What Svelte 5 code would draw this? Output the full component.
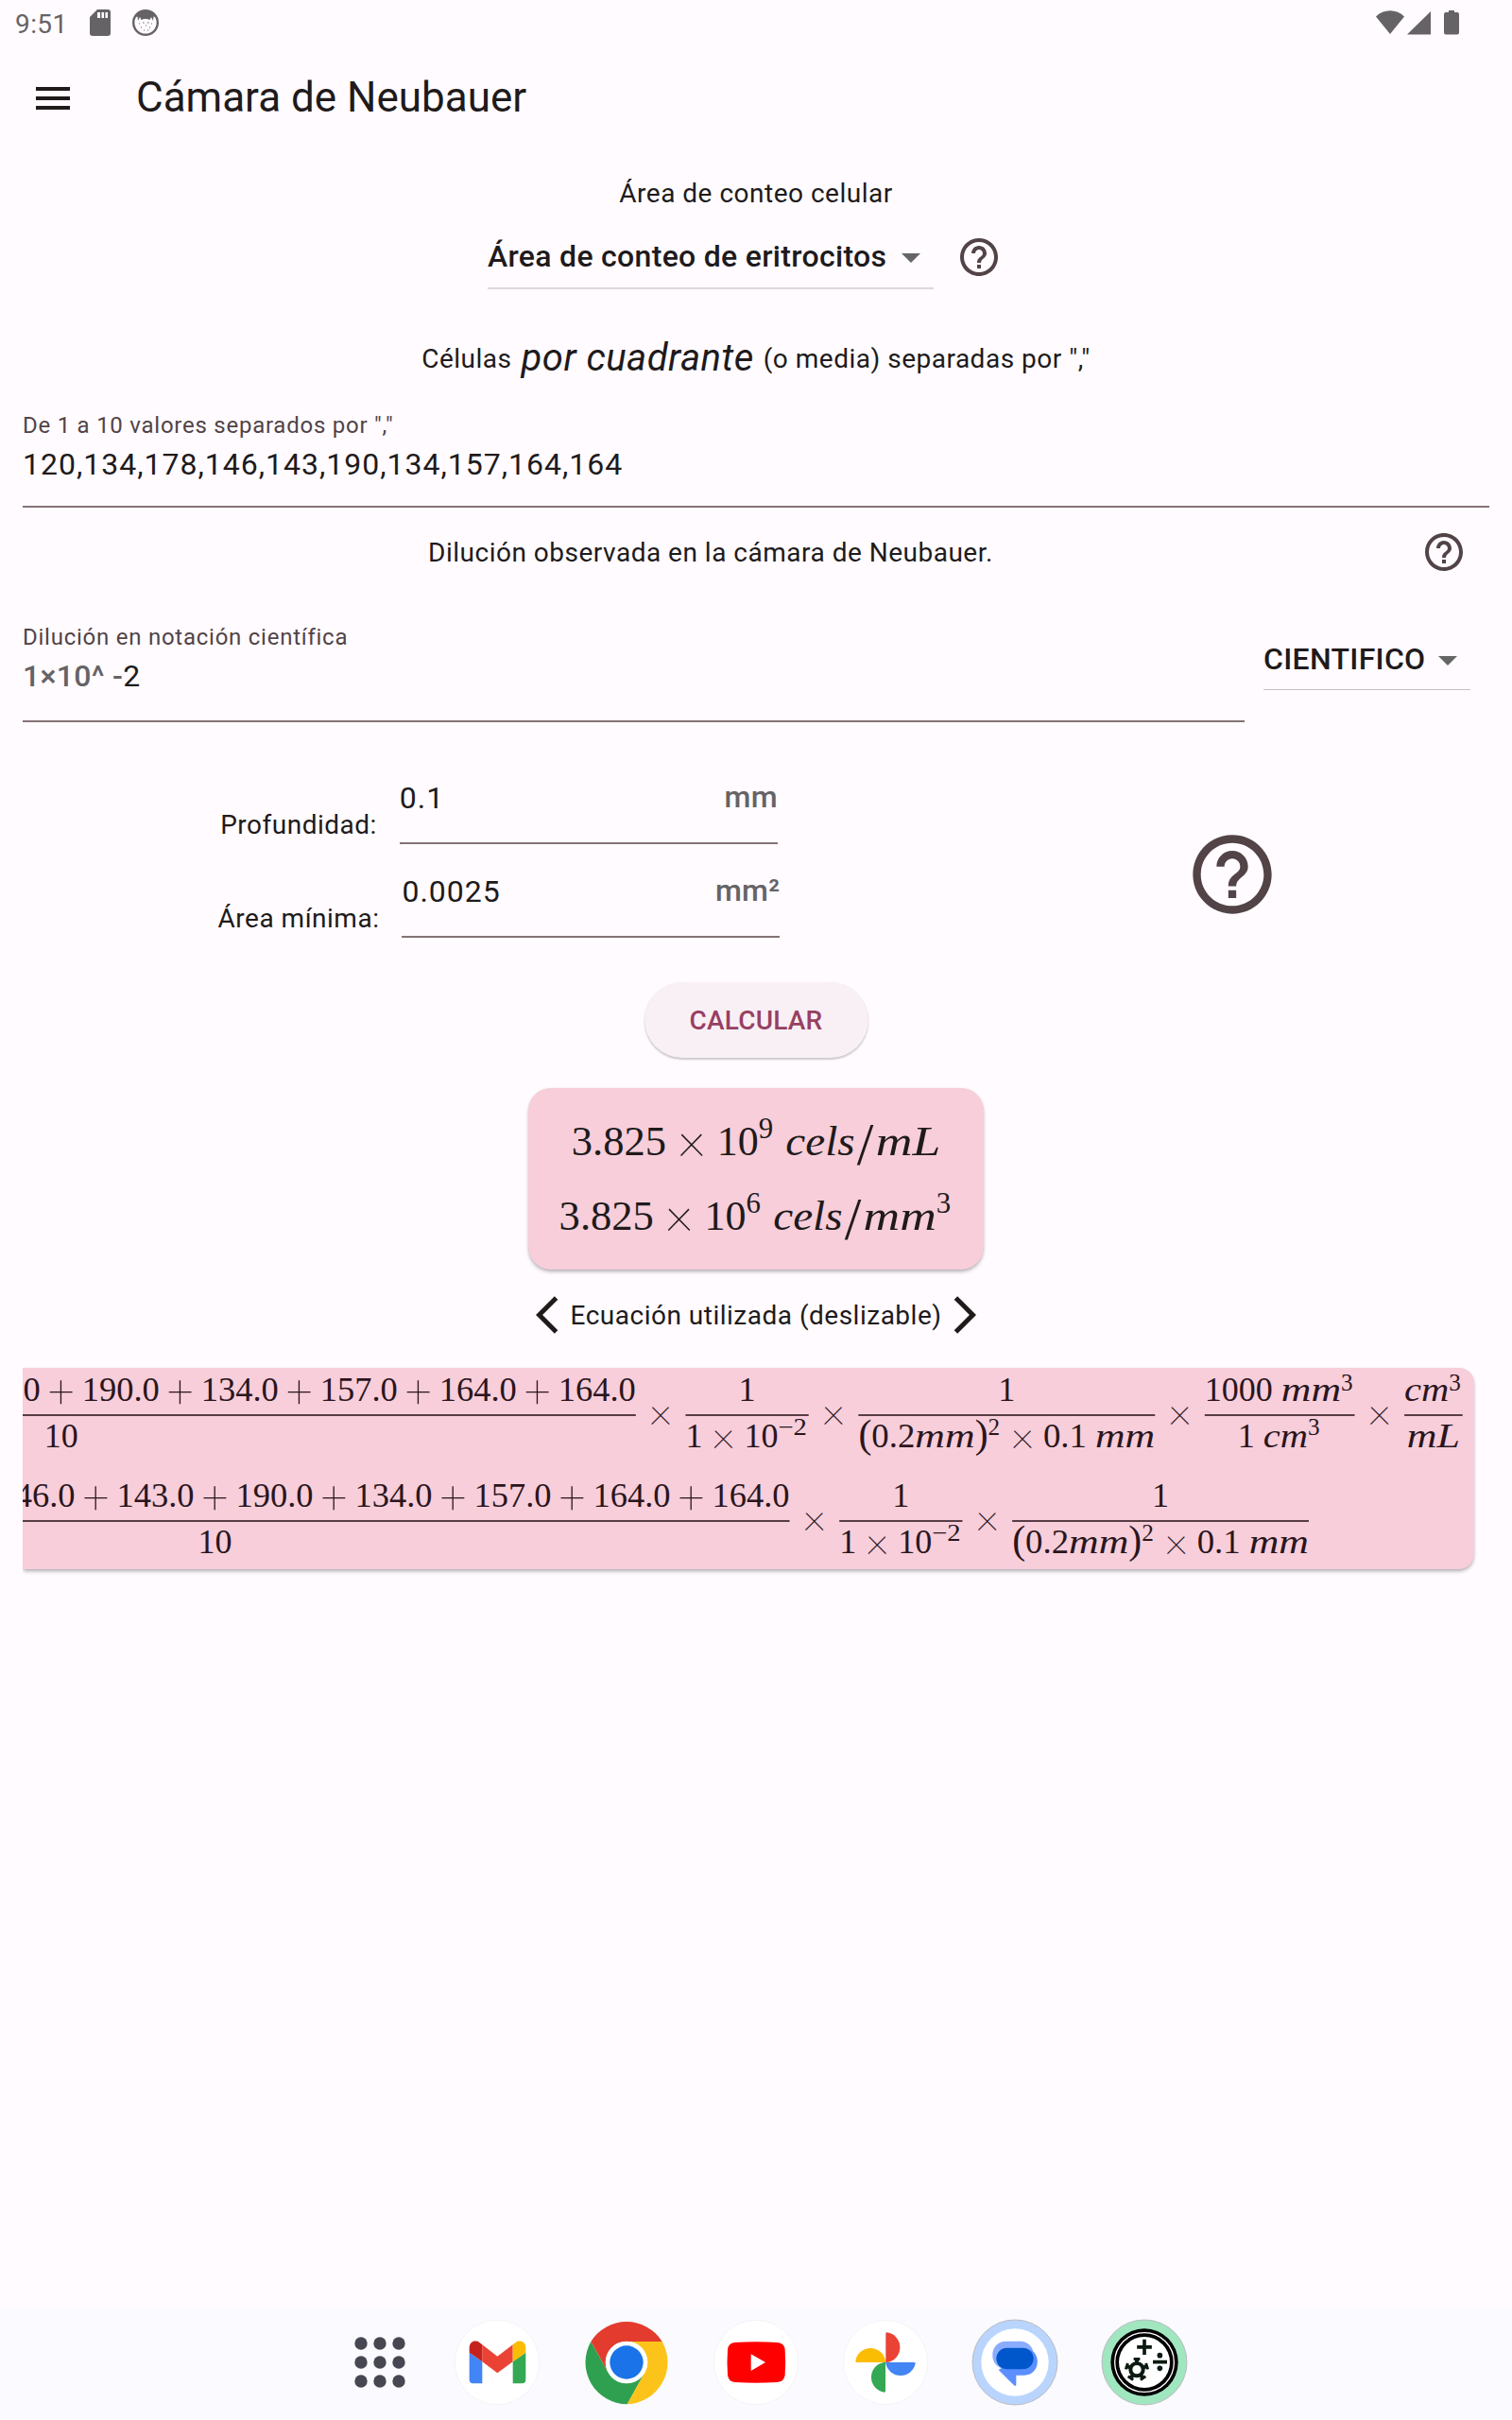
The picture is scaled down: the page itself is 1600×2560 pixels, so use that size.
<script lang="ts">
  type Tok =
    | { k: 'rm' | 'it' | 'op' | 'paren' | 'slash'; t: string }
    | { k: 'sup'; t: string; up: number }
    | { k: 'sp' }
    | { k: 'frac'; num: Tok[]; den: Tok[] };
  type Glyph = { x: number; y: number; t: string; size: number; w: number; cls: string };
  type Bar = { x: number; y: number; w: number; h: number };

  // Advance widths in em
  const adv: Record<string, number> = {
    '.': 0.278, c: 0.433, e: 0.466, l: 0.298, s: 0.469, m: 0.878, L: 0.681, '−': 0.71
  };
  const runWidth = (t: string) => [...t].reduce((a, ch) => a + (adv[ch] ?? 0.5), 0);

  function width(toks: Tok[]): number {
    return toks.reduce((a, k) => a + tokWidth(k), 0);
  }
  function tokWidth(k: Tok): number {
    if (k.k === 'op') return 1.222;
    if (k.k === 'paren') return 0.389;
    if (k.k === 'slash') return 0.5;
    if (k.k === 'sp') return 0.25;
    if (k.k === 'sup') return runWidth(k.t) * 0.7 + 0.05;
    if (k.k === 'frac') return Math.max(width(k.num), width(k.den)) + 0.24;
    return runWidth(k.t);
  }

  function place(toks: Tok[], x: number, y: number, em: number, g: Glyph[], b: Bar[]) {
    for (const k of toks) {
      const w = tokWidth(k) * em;
      if (k.k === 'frac') {
        const inner = w - 0.24 * em;
        const left = x + 0.12 * em;
        place(k.num, left + (inner - width(k.num) * em) / 2, y - 0.672 * em, em, g, b);
        place(k.den, left + (inner - width(k.den) * em) / 2, y + 0.7 * em, em, g, b);
        b.push({ x: left, y: y - 0.25 * em - 1, w: inner, h: 2 });
      } else if (k.k === 'op') {
        const plus = k.t === '+';
        const scale = plus ? 1.36 : 1.3;
        const rise = plus ? 0.335 : 0.21;
        g.push({ x: x + w / 2, y: y + (scale * rise - 0.25) * em, t: k.t, size: em * scale, w: 0, cls: 'mid op' });
      } else if (k.k === 'paren') {
        g.push({ x: x + w / 2, y: y - 0.01 * em, t: k.t, size: em * 1.16, w: 0, cls: 'mid' });
      } else if (k.k === 'slash') {
        g.push({ x: x + w / 2, y: y + 0.235 * em, t: k.t, size: em * 1.44, w: 0, cls: 'mid' });
      } else if (k.k === 'sup') {
        g.push({ x, y: y - k.up * em, t: k.t, size: em * 0.7, w: w - 0.05 * em, cls: 'rm' });
      } else if (k.k !== 'sp') {
        g.push({ x, y, t: k.t, size: em, w, cls: k.k });
      }
      x += w;
    }
  }

  const rm = (t: string): Tok => ({ k: 'rm', t });
  const it = (t: string): Tok => ({ k: 'it', t });
  const op = (t: string): Tok => ({ k: 'op', t });
  const sup = (t: string, up = 0.413): Tok => ({ k: 'sup', t, up });
  const sp: Tok = { k: 'sp' };
  const frac = (num: Tok[], den: Tok[]): Tok => ({ k: 'frac', num, den });

  const values = '120,134,178,146,143,190,134,157,164,164';
  const sum = values.split(',').flatMap((v, i) => (i ? [op('+'), rm(v + '.0')] : [rm(v + '.0')]));
  const mean = frac(sum, [rm('10')]);
  const dilution = frac([rm('1')], [rm('1'), op('×'), rm('10'), sup('−2', 0.36)]);
  const volume = frac(
    [rm('1')],
    [{ k: 'paren', t: '(' }, rm('0.2'), it('mm'), { k: 'paren', t: ')' }, sup('2', 0.36), op('×'), rm('0.1'), sp, it('mm')]
  );
  const eq1 = [
    mean, op('×'), dilution, op('×'), volume, op('×'),
    frac([rm('1000'), sp, it('mm'), sup('3', 0.3)], [rm('1'), sp, it('cm'), sup('3', 0.36)]),
    op('×'),
    frac([it('cm'), sup('3', 0.3)], [it('mL')])
  ];
  const eq2 = [mean, op('×'), dilution, op('×'), volume];

  const cels: Tok[] = [it('cels'), { k: 'slash', t: '/' }];
  const r1 = [rm('3.825'), op('×'), rm('10'), sup('9', 0.4), sp, ...cels, it('mL')];
  const r2 = [rm('3.825'), op('×'), rm('10'), sup('6', 0.4), sp, ...cels, it('mm'), sup('3', 0.4)];

  function build(lines: { toks: Tok[]; center: number; y: number }[], em: number) {
    const g: Glyph[] = [];
    const b: Bar[] = [];
    for (const l of lines) place(l.toks, l.center - (width(l.toks) * em) / 2, l.y, em, g, b);
    // Runs scrolled past the left edge are not rendered
    return { g: g.filter((o) => o.x + o.w > 0), b };
  }
  const scrollCenter = 1528 - (width(eq1) * 36) / 2;
  const equation = build(
    [{ toks: eq1, center: scrollCenter, y: 59 }, { toks: eq2, center: scrollCenter, y: 171 }],
    36
  );
  const result = build([{ toks: r1, center: 241, y: 70.5 }, { toks: r2, center: 241, y: 149.5 }], 44);
</script>

{#snippet help(cls: string)}
  <svg class={cls} viewBox="0 0 24 24"><path fill="#524347" d="M11 18h2v-2h-2v2zm1-16C6.480 2 2 6.480 2 12s4.480 10 10 10 10-4.480 10-10S17.520 2 12 2zm0 18c-4.410 0-8-3.590-8-8s3.590-8 8-8 8 3.590 8 8-3.590 8-8 8zm0-14c-2.210 0-4 1.790-4 4h2c0-1.100.9-2 2-2s2 .9 2 2c0 2-3 1.750-3 5h2c0-2.250 3-2.500 3-5 0-2.210-1.790-4-4-4z" /></svg>
{/snippet}

{#snippet caret()}
  <svg class="caret" viewBox="0 0 20 10"><path d="M0 0h20L10 10z" fill="#666" /></svg>
{/snippet}

{#snippet math(m: { g: Glyph[]; b: Bar[] })}
  {#each m.b as b}<rect x={b.x} y={b.y} width={b.w} height={b.h} opacity="0.78" />{/each}
  {#each m.g as g}
    {#if g.w}
      <text class={g.cls} x={g.x} y={g.y} font-size={g.size} textLength={g.w} lengthAdjust="spacingAndGlyphs">{g.t}</text>
    {:else}
      <text class={g.cls} x={g.x} y={g.y} font-size={g.size}>{g.t}</text>
    {/if}
  {/each}
{/snippet}

<div class="screen">
  <div class="status">
    <span class="clock">9:51</span>
    <svg class="sd" viewBox="0 0 22 28"><path fill="#666366" d="M8 0h11a3 3 0 0 1 3 3v22a3 3 0 0 1-3 3H3a3 3 0 0 1-3-3V8z" /><path fill="#fffbff" d="M8 3h3v6H8zM12.500 3h2.500v6h-2.500zM16.500 3h2.500v6h-2.500z" /></svg>
    <svg class="face" viewBox="0 0 28 28"><circle cx="14" cy="14" r="12.800" fill="#fffbff" stroke="#666366" stroke-width="2.400" /><path fill="#666366" d="M3.500 8C8-1 20-1 24.500 8L22.500 7.500 22 12l-2-4-1.500 3-3-1h-3l-3 1L8 8l-2 4-.5-4.500z" /><path stroke="#666366" stroke-width="1.200" fill="none" d="M7 15h1M11 14h1.500M16 14h1.500M20 15h1M9 19h1M14 17h1M18 19h1M12 22h1M16 22h1" /></svg>
    <span class="grow"></span>
    <svg class="signals" viewBox="0 0 90 28"><g fill="#666366"><path d="M0 6.500C8-1.800 22-1.800 30 6.500L15 25z" /><path d="M33 25.500L58 1v24.500z" /><path d="M77 0h6v2h3a2 2 0 0 1 2 2v19.500a2 2 0 0 1-2 2H74a2 2 0 0 1-2-2V4a2 2 0 0 1 2-2h3z" /></g></svg>
  </div>

  <header>
    <svg class="menu" viewBox="0 0 36 24"><path fill="#201a1b" d="M0 0h36v4H0zM0 10h36v4H0zM0 20h36v4H0z" /></svg>
    <h1>Cámara de Neubauer</h1>
  </header>

  <main>
    <div class="caption">Área de conteo celular</div>
    <div class="area">
      <div class="select wide"><span>Área de conteo de eritrocitos</span>{@render caret()}</div>
      {@render help('q')}
    </div>
    <div class="cells"><span>Células</span><em>por cuadrante</em><span>(o media) separadas por ","</span></div>

    <div class="field first">
      <div class="label">De 1 a 10 valores separados por ","</div>
      <div class="value">{values}</div>
    </div>

    <div class="observed"><span>Dilución observada en la cámara de Neubauer.</span>{@render help('q')}</div>

    <div class="dilution">
      <div class="field second">
        <div class="label">Dilución en notación científica</div>
        <div class="value"><span class="affix">1×10^ -</span>2</div>
      </div>
      <div class="select small"><span>CIENTIFICO</span>{@render caret()}</div>
    </div>

    <div class="params">
      <div class="dims">
        <div class="dim"><span class="name">Profundidad:</span><div class="box"><span>0.1</span><span class="affix unit">mm</span></div></div>
        <div class="dim"><span class="name">Área mínima:</span><div class="box"><span>0.0025</span><span class="affix unit">mm²</span></div></div>
      </div>
      <div class="bighelp">{@render help('q big')}</div>
    </div>

    <button>CALCULAR</button>

    <svg class="result" width="482" height="192">{@render math(result)}</svg>

    <div class="hint">
      <svg class="chev" viewBox="0 2 12 20"><path fill="#201a1b" d="M11.670 3.870L9.900 2.100 0 12l9.900 9.900 1.770-1.770L3.540 12z" /></svg>
      <span>Ecuación utilizada (deslizable)</span>
      <svg class="chev" viewBox="0 2 12 20"><path fill="#201a1b" d="M.33 3.870L2.100 2.100 12 12l-9.900 9.900-1.770-1.770L8.460 12z" /></svg>
    </div>

    <svg class="equation" width="1536" height="213">{@render math(equation)}</svg>
  </main>

  <nav>
    <svg class="apps" viewBox="0 0 54 54"><g fill="#474751">{#each [7, 27, 47] as y}{#each [7, 27, 47] as x}<circle cx={x} cy={y} r="6.700" />{/each}{/each}</g></svg>
    <svg class="app" viewBox="-141 -141 282 282">
      <circle r="134" fill="#fff" stroke="#eeeef4" stroke-width="2" />
      <path fill="#4285f4" d="M-88-31L-47-2V67H-76a12 12 0 0 1-12-12z" />
      <path fill="#34a853" d="M91-31L50-2V67H79a12 12 0 0 0 12-12z" />
      <path fill="#ea4335" d="M-47-56L1-19 50-56V-2L1 34-47-2z" />
      <path fill="#c5221f" d="M-88-31V-46C-88-66-69-73-56-63L-47-56V-2z" />
      <path fill="#fbbc04" d="M91-31V-46C91-66 72-73 59-63L50-56V-2z" />
    </svg>
    <svg class="app" viewBox="-141 -141 282 282">
      <path fill="#2fa050" d="M-113-66L-58 32A66 66 0 0 0 58 32L2 133A133 133 0 0 1-113-66z" />
      <path fill="#fcc31a" d="M113-66A133 133 0 0 1 2 133L58 32A66 66 0 0 0 0-66z" />
      <path fill="#e33b2e" d="M-113-66A133 133 0 0 1 113-66H0A66 66 0 0 0-58 32z" />
      <circle r="67" fill="#fff" /><circle r="53" fill="#1a73e8" />
    </svg>
    <svg class="app" viewBox="-141 -141 282 282">
      <circle r="134" fill="#fff" stroke="#eeeef4" stroke-width="2" />
      <path fill="#f00" d="M-68-63Q0-67 68-63Q90-61 92-40Q95 0 92 40Q90 61 68 63Q0 67-68 63Q-88 61-90 40Q-93 0-90-40Q-88-61-68-63z" />
      <path fill="#fff" d="M-16-26V27L30 0z" />
    </svg>
    <svg class="app" viewBox="-141 -141 282 282">
      <circle r="134" fill="#fff" stroke="#eeeef4" stroke-width="2" />
      <path fill="#ea4335" d="M1 0V-91Q1-95 5-95A48 48 0 0 1 5 0z" />
      <path fill="#fbbc04" d="M0 0H-91Q-95 0-95-4A48 48 0 0 1 0-4z" />
      <path fill="#4285f4" d="M1 0H91Q95 0 95 4A48 48 0 0 1 1 4z" />
      <path fill="#34a853" d="M0 0V91Q0 95-4 95A48 48 0 0 1-4 0z" />
    </svg>
    <svg class="app" viewBox="-141 -141 282 282">
      <circle r="135" fill="#b9d5fe" stroke="#bcbcc2" stroke-width="3" /><circle r="107" fill="#fff" />
      <rect x="-71" y="-67" width="130" height="88" rx="42" fill="#8aacff" />
      <path fill="#5c8fff" d="M50-39C84-24 78 40 30 41H4V70Q3 78-3 73L-52 24z" />
      <rect x="-59" y="-46" width="118" height="68" rx="34" fill="#0057cc" />
    </svg>
    <svg class="app" viewBox="-141 -141 282 282">
      <circle r="135" fill="#a0e6bf" stroke="#bcbcc2" stroke-width="3" /><circle r="107" fill="#000" />
      <circle r="94" fill="none" stroke="#fff" stroke-width="4" /><circle r="81" fill="#fff" />
      <g fill="#0c1a10">
        <path d="M-5.500-73h11v19h18v11h-18v19h-11v-19h-18v-11h18zM27-6.500h45v11H27z" /><circle cx="49" cy="-22" r="8.500" /><circle cx="49" cy="19" r="8.500" />
        <g transform="translate(-24 23)">
          <circle r="20" fill="none" stroke="#0c1a10" stroke-width="12" />
          {#each [0, 72, 144, 216, 288] as a}<path transform="rotate({a})" d="M-10-38h20v9H6v8H-6v-8h-4z" />{/each}
        </g>
      </g>
    </svg>
  </nav>
</div>

<style>
  :global(body) { background: #fffbff; }
  .screen { display: flex; flex-direction: column; height: 2560px; width: 1600px; font-family: Roboto, sans-serif; font-size: 28px; letter-spacing: 0.5px; color: #201a1b; background: #fffbff; overflow: hidden; }
  svg { display: block; flex: none; }
  .status { display: flex; align-items: center; height: 48px; padding: 0 54px 0 16px; box-sizing: border-box; }
  .clock { width: 79px; font-size: 28px; letter-spacing: 0.4px; color: #666366; padding-top: 2px; }
  .sd { width: 22px; height: 28px; }
  .face { width: 28px; height: 28px; margin-left: 23px; }
  .grow { flex: 1; }
  .signals { width: 90px; height: 28px; padding-top: 2px; }
  header { display: flex; align-items: center; height: 112px; padding-left: 38px; }
  .menu { width: 36px; height: 24px; }
  h1 { margin: 0 0 3px 70px; font-size: 44px; font-weight: 400; letter-spacing: 0; }
  main { display: flex; flex-direction: column; padding: 0 24px; }
  .caption { height: 63px; margin-top: 13px; line-height: 64px; text-align: center; }
  .area { display: flex; height: 70px; align-items: center; padding-left: 492px; gap: 24px; }
  .area > .q { margin-top: 2px; }
  .q { width: 48px; height: 48px; }
  .select { display: flex; align-items: center; justify-content: space-between; box-sizing: border-box; font-size: 32px; font-weight: 500; letter-spacing: 0.3px; white-space: nowrap; }
  .caret { width: 20px; height: 10px; margin-top: 4px; }
  .wide { width: 472px; height: 69px; padding: 1px 14px 0 0; border-bottom: 2px solid #dcd9dc; }
  .cells { display: flex; align-items: center; justify-content: center; height: 124px; padding-top: 22px; box-sizing: border-box; white-space: nowrap; gap: 10px; }
  em { font-size: 40px; letter-spacing: 0.5px; padding-bottom: 1px; }
  .field { box-sizing: border-box; border-bottom: 2px solid #857376; }
  .label { height: 28px; padding-top: 1px; line-height: 29px; font-size: 24px; letter-spacing: 0.75px; color: #524347; }
  .value { height: 54px; line-height: 54px; font-size: 32px; letter-spacing: 1px; }
  .first { height: 107px; padding-top: 5px; }
  .observed { display: flex; align-items: center; height: 94px; padding-right: 24px; }
  .observed span { flex: 1; text-align: center; padding-right: 24px; }
  .affix { color: #666366; font-weight: 500; letter-spacing: 0.3px; }
  .unit { margin-top: -1px; }
  .dilution { display: flex; height: 133px; }
  .second { width: 1293px; padding-top: 28px; }
  .small { width: 219px; height: 64px; margin: 35px 0 0 20px; padding: 0 14px 2px 0; border-bottom: 1px solid #c2bfc2; }
  .params { display: flex; height: 228px; margin-bottom: 47px; }
  .dims { width: 1007px; padding-top: 30px; }
  .dim { display: flex; justify-content: center; height: 99px; padding-left: 1px; }
  .name { padding-top: 63px; line-height: 32px; margin-right: 24px; }
  .box { display: flex; justify-content: space-between; width: 400px; box-sizing: border-box; border-bottom: 2px solid #857376; padding-top: 30px; line-height: 40px; font-size: 32px; letter-spacing: 1px; }
  .bighelp { flex: 1; display: flex; justify-content: center; padding-top: 111px; }
  .big { width: 100px; height: 100px; }
  button { align-self: center; width: 237px; height: 80px; border: 0; border-radius: 40px; background: #f9f0f6; color: #984061; font: 500 28px Roboto, sans-serif; letter-spacing: 0.2px; box-shadow: 0 2px 2px rgba(0, 0, 0, 0.2), 0 0 1px rgba(0, 0, 0, 0.08); }
  .result, .equation { background: #f7ceda; box-shadow: 0 3px 4px -1px rgba(0, 0, 0, 0.32), 0 0 2px rgba(0, 0, 0, 0.08); }
  .result { align-self: center; margin-top: 32px; border-radius: 24px; fill: #201a1b; }
  .equation { border-radius: 0 16px 16px 0; fill: #2b151c; clip-path: inset(-10px -12px -14px 0); }
  text { font-family: "Liberation Serif", serif; letter-spacing: 0; }
  text.it { font-style: italic; }
  text.mid { text-anchor: middle; }
  text.op { font-family: Roboto, sans-serif; font-weight: 100; }
  .hint { display: flex; justify-content: center; align-items: center; height: 96px; margin-bottom: 8px; gap: 13px; }
  .chev { width: 24px; height: 40px; }
  nav { display: flex; align-items: center; gap: 43px; height: 120px; margin-top: auto; padding: 0 0 2px 374.5px; box-sizing: border-box; background: #fafaff; }
  .apps { width: 54px; height: 54px; margin-right: 7px; }
  .app { width: 94px; height: 94px; }
</style>
